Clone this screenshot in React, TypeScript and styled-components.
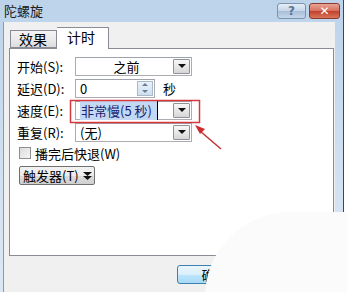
import styled, { createGlobalStyle } from "styled-components";

const GlobalStyle = createGlobalStyle`
  html, body {
    margin: 0;
    padding: 0;
    background: #ffffff;
  }
  body {
    font-family: "Noto Sans CJK SC", "DejaVu Sans", sans-serif;
    font-size: 12px;
    color: #000;
  }
`;

const Page = styled.div`
  position: relative;
  width: 347px;
  height: 292px;
  overflow: hidden;
`;

const Frame = styled.div`
  display: flex;
  flex-direction: column;
  width: 343px;
  height: 300px;
  background: linear-gradient(180deg, #bcd3ea 0%, #d2e1f1 60%, #dce8f4 100%);
  border-right: 1px solid #34495e;
`;

const TitleBar = styled.div`
  display: flex;
  align-items: center;
  height: 22px;
  padding: 0 3px 0 4px;
`;

const Title = styled.div`
  flex: 1;
  font-size: 13px;
  color: #1a1a1a;
  line-height: 22px;
`;

const CaptionButton = styled.div<{ $close?: boolean }>`
  display: flex;
  align-items: center;
  justify-content: center;
  width: ${(p) => (p.$close ? 31 : 29)}px;
  height: 16px;
  margin-left: 3px;
  border-radius: 3px;
  border: 1px solid ${(p) => (p.$close ? "#8b3a33" : "#7c93ad")};
  background: ${(p) =>
    p.$close
      ? "linear-gradient(180deg, #e8a595 0%, #d6715f 48%, #c2402e 52%, #d8775a 100%)"
      : "linear-gradient(180deg, #e4edf7 0%, #c6d6e8 48%, #a9bfd8 52%, #c3d6ea 100%)"};
  color: ${(p) => (p.$close ? "#fff" : "#5a7493")};
  font-family: "DejaVu Sans", sans-serif;
  font-weight: bold;
  font-size: 12px;
  box-sizing: border-box;
`;

const Client = styled.div`
  flex: 1;
  margin: 0 8px 0 3px;
  background: #f0f0f0;
  border-left: 1px solid #8d99a6;
  padding: 5px 0 0 5px;
`;

const TabStrip = styled.div`
  display: flex;
  align-items: flex-end;
  height: 21px;
  padding-left: 1px;
  position: relative;
  z-index: 1;
`;

const Tab = styled.div<{ $active?: boolean }>`
  box-sizing: border-box;
  width: ${(p) => (p.$active ? 52 : 47)}px;
  height: ${(p) => (p.$active ? 22 : 18)}px;
  margin-bottom: ${(p) => (p.$active ? -1 : 0)}px;
  border: 1px solid #898c95;
  border-bottom: ${(p) => (p.$active ? "none" : "1px solid #898c95")};
  border-left: ${(p) => (p.$active ? "none" : "1px solid #898c95")};
  background: ${(p) =>
    p.$active ? "#ffffff" : "linear-gradient(180deg, #f3f3f3 0%, #ebebeb 50%, #dcdcdc 100%)"};
  padding: ${(p) => (p.$active ? "1px 0 0 10px" : "0 0 0 8px")};
  font-size: 14px;
  line-height: 17px;
`;

const Panel = styled.div`
  box-sizing: border-box;
  width: 325px;
  height: 208px;
  background: #ffffff;
  border: 1px solid #898c95;
  padding: 8px 0 0 7px;
  display: flex;
  flex-direction: column;
  gap: 4px;
`;

const Row = styled.div`
  display: flex;
  align-items: center;
  height: 18px;
`;

const Label = styled.div`
  width: 58px;
  font-size: 13px;
  white-space: nowrap;
`;

const Field = styled.div<{ $w: number }>`
  box-sizing: border-box;
  display: flex;
  align-items: center;
  width: ${(p) => p.$w}px;
  height: 19px;
  border: 1px solid #abadb3;
  border-top-color: #9ea3ad;
  background: #fff;
  padding: 1px 1px 1px 4px;
`;

const FieldText = styled.div<{ $center?: boolean }>`
  flex: 1;
  font-size: 13px;
  line-height: 15px;
  text-align: ${(p) => (p.$center ? "center" : "left")};
  white-space: nowrap;
`;

const Selected = styled.span`
  background: #c2d8f4;
  color: #17236e;
  padding: 0 5px 0 1px;
  border-right: 1px solid #000;
`;

const DropButton = styled.div`
  box-sizing: border-box;
  width: 17px;
  height: 15px;
  border: 1px solid #8f9398;
  border-radius: 1px;
  background: linear-gradient(180deg, #f7f7f7 0%, #e6e6e6 55%, #d6d6d6 100%);
  display: flex;
  align-items: center;
  justify-content: center;
`;

const Arrow = styled.div`
  width: 0;
  height: 0;
  border-left: 4px solid transparent;
  border-right: 4px solid transparent;
  border-top: 4px solid #111;
`;

const Spin = styled.div`
  box-sizing: border-box;
  width: 16px;
  height: 15px;
  display: flex;
  flex-direction: column;
  border: 1px solid #a8b9cc;
  background: linear-gradient(180deg, #e9f1fa 0%, #cfe0f1 100%);
`;

const SpinHalf = styled.div<{ $up?: boolean }>`
  flex: 1;
  display: flex;
  align-items: center;
  justify-content: center;
  &::after {
    content: "";
    border-left: 3px solid transparent;
    border-right: 3px solid transparent;
    ${(p) =>
      p.$up ? "border-bottom: 3px solid #6a7d92;" : "border-top: 3px solid #6a7d92;"}
  }
`;

const Unit = styled.div`
  margin-left: 8px;
  font-size: 13px;
`;

const CheckRow = styled.div`
  display: flex;
  align-items: center;
  height: 18px;
  margin-top: -1px;
  padding-left: 2px;
  gap: 4px;
  font-size: 13px;
`;

const Check = styled.div`
  box-sizing: border-box;
  width: 12px;
  height: 12px;
  border: 1px solid #8e8f8f;
  background: linear-gradient(135deg, #dcdcdc 0%, #f6f6f6 100%);
`;

const TriggerButton = styled.div`
  box-sizing: border-box;
  display: flex;
  align-items: center;
  gap: 4px;
  width: 76px;
  height: 19px;
  margin-left: 2px;
  padding-left: 3px;
  border: 1px solid #707070;
  border-radius: 2px;
  background: linear-gradient(180deg, #f2f2f2 0%, #ebebeb 50%, #dddddd 51%, #cfcfcf 100%);
  font-size: 13px;
  white-space: nowrap;
`;

const Footer = styled.div`
  display: flex;
  padding: 9px 0 0 168px;
`;

const PushButton = styled.div`
  box-sizing: border-box;
  width: 75px;
  height: 19px;
  border: 1px solid #3c7fb1;
  border-radius: 3px;
  background: linear-gradient(180deg, #eaf6fd 0%, #d9f0fc 50%, #bee6fd 51%, #a7d9f5 100%);
  text-align: center;
  font-size: 13px;
  line-height: 17px;
`;

const Smudge = styled.div`
  position: absolute;
  left: 205px;
  top: 212px;
  width: 200px;
  height: 120px;
  background: #fbfbfb;
  border-top-left-radius: 85px;
`;

const Annotation = styled.svg`
  position: absolute;
  left: 0;
  top: 0;
  pointer-events: none;
`;

function App() {
  return (
    <Page>
      <GlobalStyle />
      <Frame>
        <TitleBar>
          <Title>陀螺旋</Title>
          <CaptionButton>?</CaptionButton>
          <CaptionButton $close>✕</CaptionButton>
        </TitleBar>
        <Client>
          <TabStrip>
            <Tab>效果</Tab>
            <Tab $active>计时</Tab>
          </TabStrip>
          <Panel>
            <Row>
              <Label>开始(S):</Label>
              <Field $w={117}>
                <FieldText $center>之前</FieldText>
                <DropButton>
                  <Arrow />
                </DropButton>
              </Field>
            </Row>
            <Row>
              <Label>延迟(D):</Label>
              <Field $w={80}>
                <FieldText>0</FieldText>
                <Spin>
                  <SpinHalf $up />
                  <SpinHalf />
                </Spin>
              </Field>
              <Unit>秒</Unit>
            </Row>
            <Row>
              <Label>速度(E):</Label>
              <Field $w={117}>
                <FieldText>
                  <Selected>非常慢(5 秒)</Selected>
                </FieldText>
                <DropButton>
                  <Arrow />
                </DropButton>
              </Field>
            </Row>
            <Row>
              <Label>重复(R):</Label>
              <Field $w={117}>
                <FieldText>(无)</FieldText>
                <DropButton>
                  <Arrow />
                </DropButton>
              </Field>
            </Row>
            <CheckRow>
              <Check />
              播完后快退(W)
            </CheckRow>
            <TriggerButton>
              触发器(T)
              <svg width="9" height="9" viewBox="0 0 9 9">
                <path d="M0 1h9L4.5 5z M0 5h9L4.5 9z" fill="#111" />
              </svg>
            </TriggerButton>
          </Panel>
          <Footer>
            <PushButton>确定</PushButton>
          </Footer>
        </Client>
      </Frame>
      <Smudge />
      <Annotation width="347" height="292" viewBox="0 0 347 292">
        <rect x="70.5" y="100.5" width="129" height="22" fill="none" stroke="#d8383c" strokeWidth="1.5" />
        <line x1="221" y1="149" x2="200" y2="131" stroke="#c43034" strokeWidth="1.5" />
        <path d="M195 125 L205 129 L200 134 Z" fill="#d02a2e" />
      </Annotation>
    </Page>
  );
}

export default App;
